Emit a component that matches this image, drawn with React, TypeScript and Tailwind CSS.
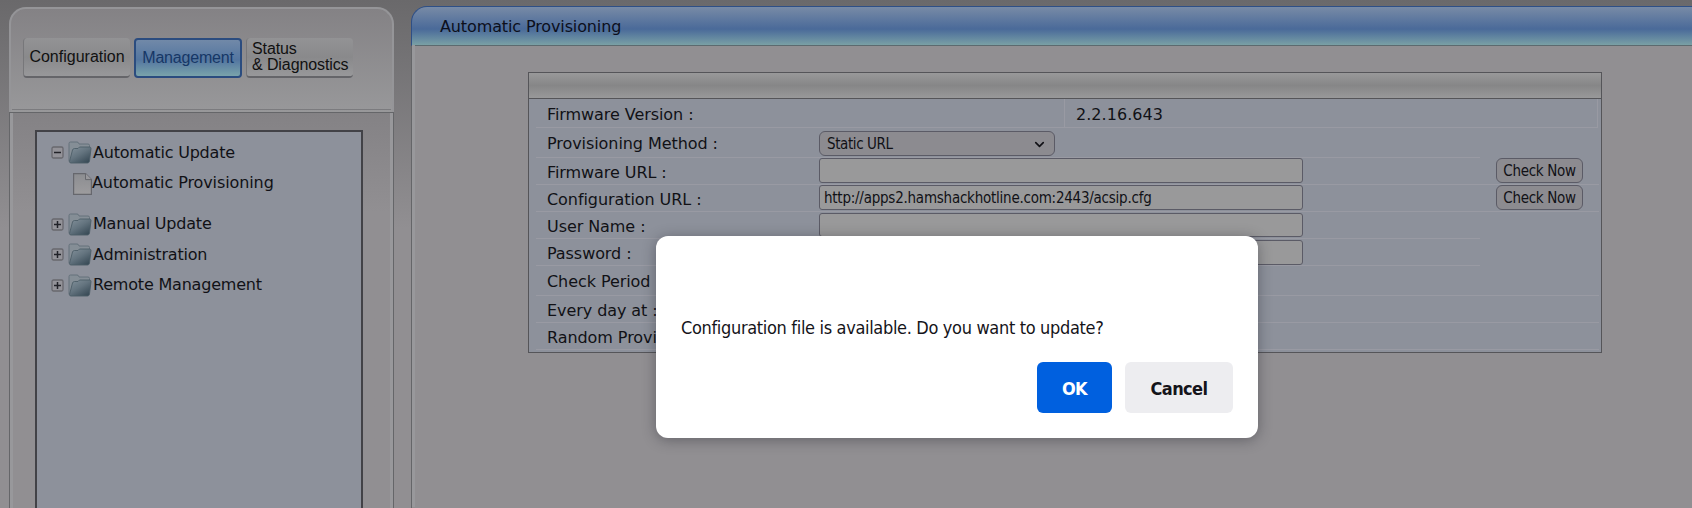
import type { ReactNode } from "react";
import { ChevronDown } from "lucide-react";

const verdana = "font-['DejaVu_Sans',Verdana,sans-serif]";
const tahoma = "font-['DejaVu_Sans_Condensed','DejaVu_Sans',Tahoma,sans-serif]";

function Toggle({ open = false }: { open?: boolean }) {
  return (
    <svg width="13" height="13" viewBox="0 0 13 13" className="shrink-0">
      <rect x="1" y="1" width="11" height="11" rx="1.5" fill="#939298" stroke="#68686e" strokeWidth="1.3" />
      <path d="M3 6.500h7" stroke="#222228" strokeWidth="1.5" />
      {!open && <path d="M6.500 3v7" stroke="#222228" strokeWidth="1.5" />}
    </svg>
  );
}

function Folder() {
  return (
    <svg width="24" height="23" viewBox="0 0 24 23" className="shrink-0">
      <defs>
        <linearGradient id="folder-front" x1="0" y1="0" x2="0.8" y2="1">
          <stop offset="0" stopColor="#83919b" />
          <stop offset="0.5" stopColor="#64747f" />
          <stop offset="1" stopColor="#384a56" />
        </linearGradient>
      </defs>
      <path d="M1 20.500V2.500Q1 1 2.500 1H9q1.300 0 1.600 1.200L11 3h9q1.500 0 1.500 1.500V8" fill="#858e96" stroke="#64717b" />
      <path
        d="M1.500 20.500 4.500 9Q5 7.500 6.500 7.500H10L11.500 6H21.500q1.500 0 1.500 1.500L21.500 20q-.3 2-2 2H3Q1.500 22 1.500 20.500Z"
        fill="url(#folder-front)"
        stroke="#4d5d68"
        strokeWidth="0.9"
      />
    </svg>
  );
}

function PageIcon() {
  return (
    <svg width="19" height="22" viewBox="0 0 19 22" className="shrink-0">
      <defs>
        <linearGradient id="page-fill" x1="0" y1="0" x2="0" y2="1">
          <stop offset="0" stopColor="#8c8d91" />
          <stop offset="1" stopColor="#9d9c9e" />
        </linearGradient>
      </defs>
      <path d="M.6.6h12l5.800 6v14.800H.6Z" fill="url(#page-fill)" stroke="#66676d" strokeWidth="1.2" />
      <path d="M12.500.6v6h6" fill="#98989c" stroke="#66676d" />
    </svg>
  );
}

const groups = [
  { label: "Manual Update", row: "h-[30px]" },
  { label: "Administration", row: "h-[31px]" },
  { label: "Remote Management", row: "h-[30px]" },
];

const idleTab =
  "flex h-10 w-[107px] items-center rounded-[4px] border-b-2 border-l border-b-[#656569] border-l-[#77777a] bg-linear-to-b from-[#939395] via-[#89898b] to-[#98989a]";

function Sidebar() {
  return (
    <aside className="ml-[9px] mt-[7px] flex h-[501px] w-[385px] shrink-0 flex-col">
      <div className="flex h-[105px] flex-col justify-between rounded-t-[17px] border-2 border-b-0 border-[#959598] bg-linear-to-b from-[#848285] to-[#98989a] pb-[2px] pt-[29px]">
        <div className="flex gap-1 pl-3 font-['Liberation_Sans',Arial,sans-serif] text-[16px] leading-4 text-[#111]">
          <div className={`${idleTab} justify-center`}>Configuration</div>
          <div className="flex h-10 w-[108px] items-center justify-center rounded-[4px] border-2 border-[#2b4c7f] bg-linear-to-b from-[#7189a8] via-[#5476a0] via-55% to-[#7aa3aa] tracking-[-0.2px] text-[#163766]">
            Management
          </div>
          <div className={`${idleTab} pl-[5px] tracking-[-0.1px]`}>
            <span>
              Status
              <br />
              &amp; Diagnostics
            </span>
          </div>
        </div>
        <div className="mx-px h-px bg-[#7b7b7e]" />
      </div>
      <div className="flex grow flex-col border-x border-t border-[#656669]">
        <div className="flex grow border-x-[3px] border-[#98989b] bg-linear-to-b from-[#848285] via-[#918f92] via-25% to-[#918f92] pl-[22px] pr-[27px] pt-[17px]">
          <div className={`${verdana} w-full border-2 border-b-0 border-[#424247] bg-[#8d919b] pl-[14px] pt-[5px] text-[16px] tracking-[-0.2px] text-[#111116]`}>
            <div className="flex h-[31px] items-center">
              <Toggle open />
              <span className="ml-1 flex items-center">
                <Folder />
                <span className="ml-px">Automatic Update</span>
              </span>
            </div>
            <div className="flex h-[41px] items-start pl-[22px] pt-[5px]">
              <PageIcon />
              <span className="leading-5 tracking-[-0.1px]">Automatic Provisioning</span>
            </div>
            {groups.map((group) => (
              <div key={group.label} className={`flex items-center ${group.row}`}>
                <Toggle />
                <span className="ml-1 flex items-center">
                  <Folder />
                  <span className="ml-px">{group.label}</span>
                </span>
              </div>
            ))}
          </div>
        </div>
      </div>
    </aside>
  );
}

const line = "border-b border-[#999aa3]";
const field = "rounded-[3px] border border-[#5b5b66] bg-[#99999a] w-[484px]";

interface RowProps {
  label: string;
  height: string;
  children?: ReactNode;
  action?: boolean;
  side?: string;
}

function Row({ label, height, children, action = false, side = "" }: RowProps) {
  return (
    <div className={`flex ${height}`}>
      <div className={`flex w-[277px] items-center pl-[11px] pt-[3px] ${line}`}>{label}</div>
      <div className={`flex w-[667px] items-end pl-[6px] ${line}`}>{children}</div>
      <div className={`flex grow items-start pl-4 ${side}`}>
        {action && (
          <button className={`${tahoma} h-[25px] w-[87px] rounded-[6px] border border-[#5b5b66] bg-[#8c8b90] pt-px text-[15px] tracking-[-0.3px]`}>
            Check Now
          </button>
        )}
      </div>
    </div>
  );
}

function ProvisioningTable() {
  return (
    <div className={`${verdana} ml-[113px] mt-[27px] h-[281px] w-[1074px] border border-[#555559] text-[16px] tracking-[-0.07px] text-[#111116]`}>
      <div className="h-[26px] border-b border-[#555559] bg-linear-to-b from-[#99999a] via-[#868687] to-[#99999a]" />
      <div className="h-[253px] bg-[#8d919b] pl-[7px] pr-[2px]">
        <div className={`flex h-[29px] w-[1062px] ${line}`}>
          <div className="flex w-[529px] items-center border-r border-[#999aa3] pl-[11px] pt-[3px]">Firmware Version :</div>
          <div className="flex grow items-center border-r border-[#999aa3] pl-[11px] pt-[3px] tracking-[0.05px]">2.2.16.643</div>
        </div>
        <Row label="Provisioning Method :" height="h-[30px]">
          <div className={`${tahoma} mb-px flex h-[25px] w-[236px] items-center justify-between rounded-[6px] border border-[#5b5b66] bg-[#8c8b90] px-[7px] pt-px text-[15px] tracking-[-0.4px]`}>
            Static URL
            <ChevronDown size={15} strokeWidth={2.6} />
          </div>
        </Row>
        <Row label="Firmware URL :" height="h-[27px]" side={line} action>
          <div className={`${field} mb-px h-[25px]`} />
        </Row>
        <Row label="Configuration URL :" height="h-[27px]" side={line} action>
          <div className={`${field} ${tahoma} mb-px flex h-[25px] items-center pl-1 pt-px text-[15px] tracking-[-0.24px]`}>
            http://apps2.hamshackhotline.com:2443/acsip.cfg
          </div>
        </Row>
        <Row label="User Name :" height="h-[27px]">
          <div className={`${field} mb-px h-6`} />
        </Row>
        <Row label="Password :" height="h-[27px]">
          <div className={`${field} h-[25px]`} />
        </Row>
        <Row label="Check Period :" height="h-[30px]" side={line} />
        <Row label="Every day at :" height="h-[27px]" side={line} />
        <Row label="Random Provisioning :" height="h-[27px]" side={line} />
      </div>
    </div>
  );
}

function ConfirmDialog() {
  return (
    <div className={`${tahoma} absolute left-[656px] top-[236px] flex h-[202px] w-[602px] flex-col rounded-[12px] bg-white text-[#15141a] shadow-[0_2px_14px_rgba(30,30,40,0.4)]`}>
      <p className="ml-[25px] mt-[80px] whitespace-nowrap text-[18px] leading-6 tracking-[-0.33px]">
        Configuration file is available. Do you want to update?
      </p>
      <div className="ml-[381px] mt-[22px] flex gap-[13px] text-[18px] font-bold tracking-[-0.6px]">
        <button className="h-[51px] w-[75px] rounded-[6px] bg-[#0060df] pt-[2px] text-white">OK</button>
        <button className="h-[51px] w-[108px] rounded-[6px] bg-[#ededf0] pt-[2px]">Cancel</button>
      </div>
    </div>
  );
}

export default function App() {
  return (
    <div className="relative flex h-[508px] w-[1692px] overflow-hidden bg-[#918f92] bg-linear-to-b from-[#6a696b] via-[#918f92] via-45% to-[#918f92]">
      <Sidebar />
      <main className="ml-[17px] mt-[6px] flex h-[502px] grow flex-col">
        <div className={`${verdana} flex h-[40px] items-center rounded-tl-[16px] border-y border-l border-[#2e4f86] border-b-[#5c6a6f] bg-linear-to-b from-[#788ba6] via-[#4a6a99] via-58% to-[#7aa0a5] pl-7 pt-[2px] text-[16px] tracking-[-0.12px] text-[#0c0f1c]`}>
          Automatic Provisioning
        </div>
        <div className="grow border-l border-[#656669] bg-[#918f92]">
          <div className="-mt-px flex h-full border-l-[3px] border-[#98989b]">
            <ProvisioningTable />
          </div>
        </div>
      </main>
      <ConfirmDialog />
    </div>
  );
}
